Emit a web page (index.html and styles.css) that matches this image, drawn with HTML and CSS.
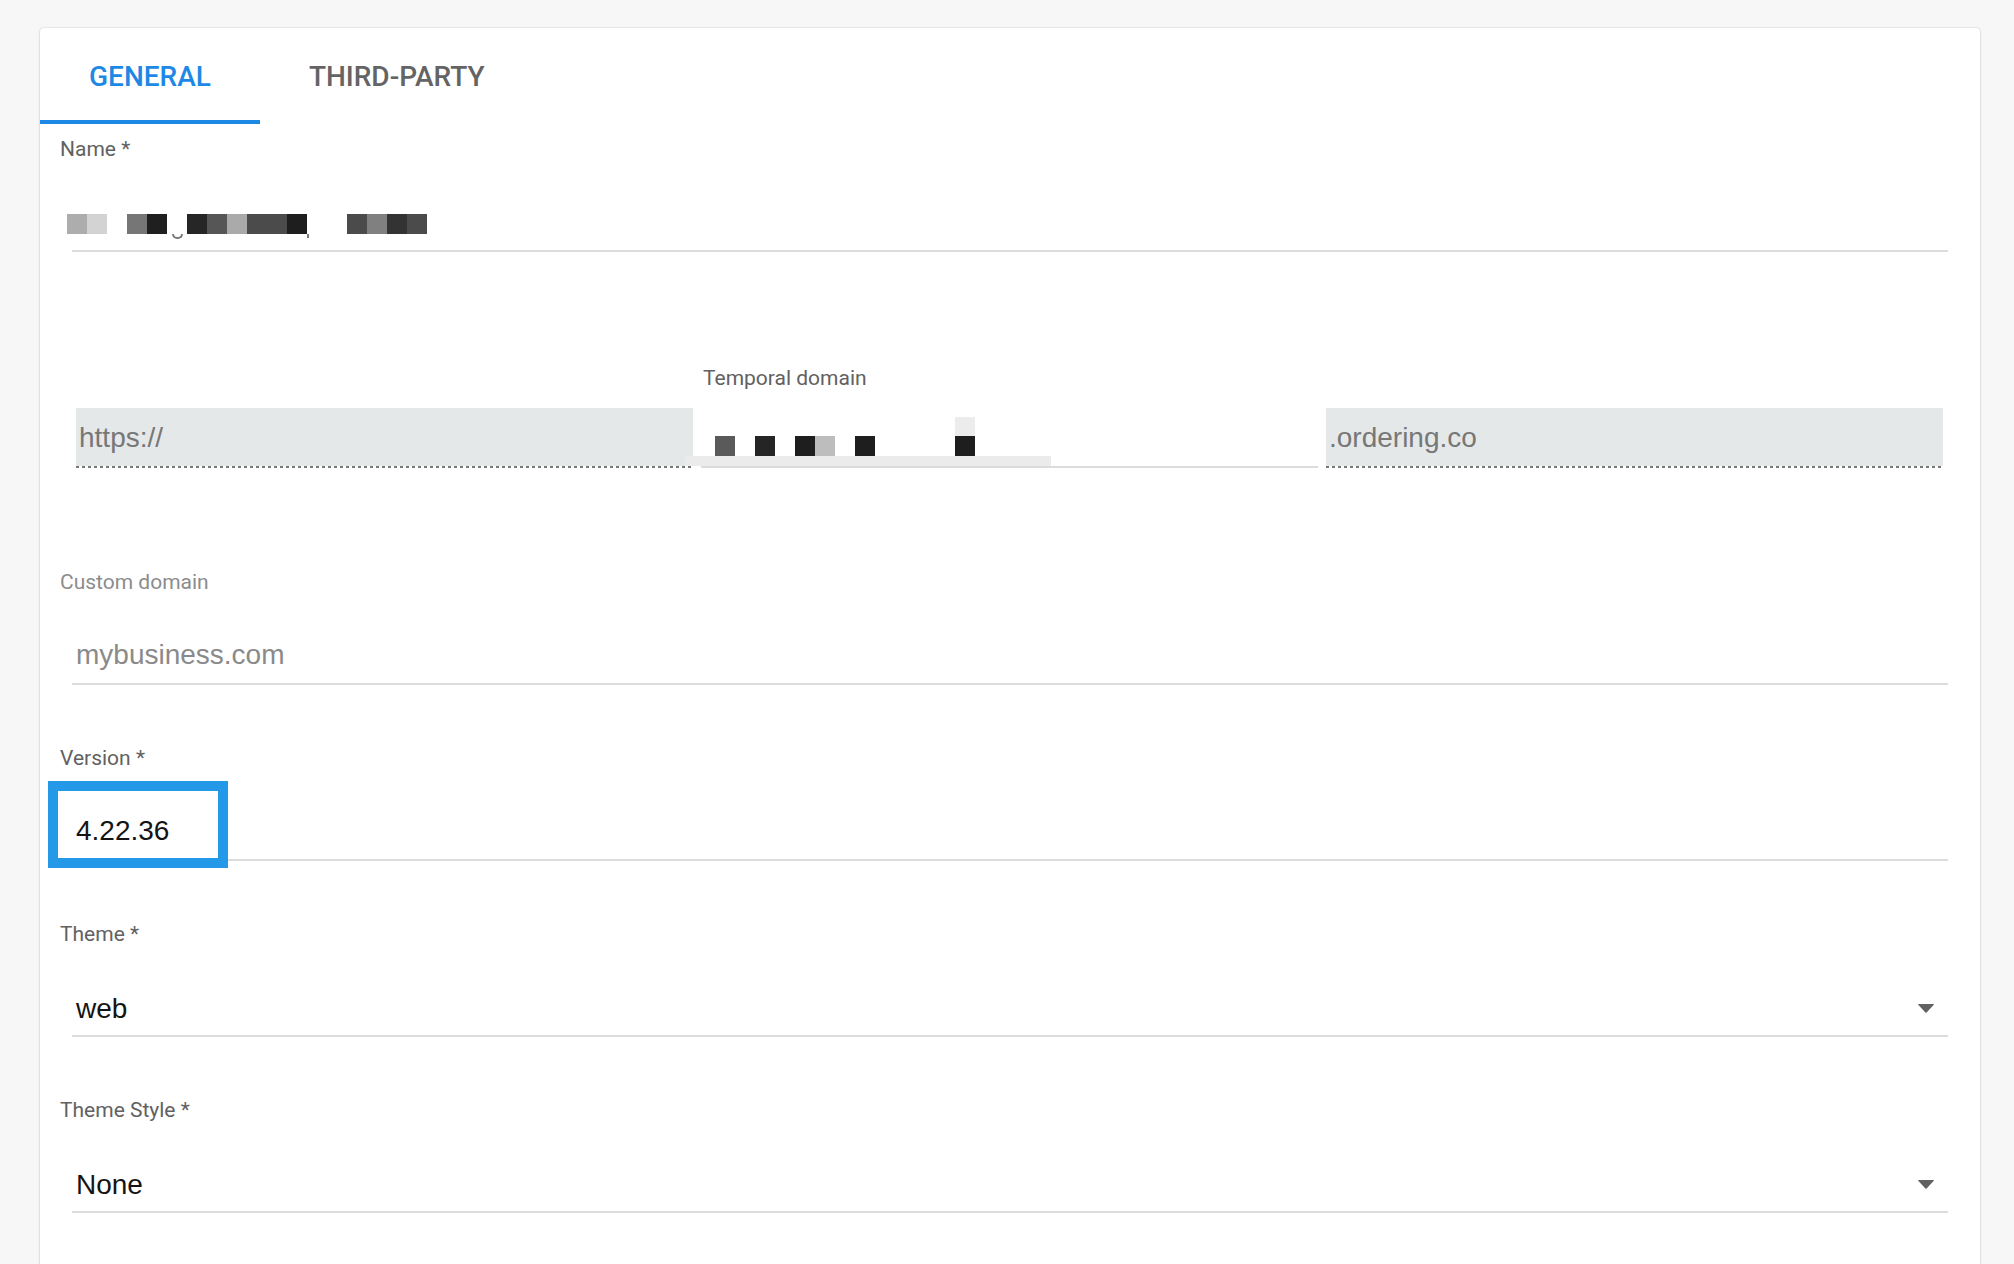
FILE: index.html
```html
<!DOCTYPE html>
<html lang="en">
<head>
<meta charset="utf-8">
<title>Business settings</title>
<link rel="stylesheet" href="styles.css">
</head>
<body>
<div class="card">
  <div class="tabs">
    <div class="tab active">GENERAL</div>
    <div class="tab">THIRD-PARTY</div>
  </div>

  <div class="form">
    <div class="field">
      <div class="label">Name *</div>
      <div class="control redacted-name">
        <span class="px c-ad"></span><span class="px c-d3"></span>
        <span class="sp20"></span>
        <span class="px c-76"></span><span class="px c-1f"></span>
        <span class="smile"></span>
        <span class="px c-26"></span><span class="px c-56"></span><span class="px c-aa"></span><span class="px wide c-4b"></span><span class="px c-1e"></span>
        <span class="tick"></span>
        <span class="px c-4b"></span><span class="px c-80"></span><span class="px c-33"></span><span class="px c-4b"></span>
      </div>
    </div>

    <div class="domain-row">
      <div class="affix">
        <div class="affix-box">https://</div>
        <div class="dots"></div>
      </div>
      <div class="temporal">
        <div class="label temporal-label">Temporal domain</div>
        <div class="temporal-control">
          <div class="redact-row">
            <span class="px c-5a"></span>
            <span class="px c-25 ml20"></span>
            <span class="px c-1e ml20"></span><span class="px c-bd"></span>
            <span class="px c-1e ml20"></span>
            <span class="stack ml80"><span class="px c-ec"></span><span class="px c-1e"></span></span>
          </div>
          <div class="redact-bar"></div>
        </div>
      </div>
      <div class="affix">
        <div class="affix-box">.ordering.co</div>
        <div class="dots"></div>
      </div>
    </div>

    <div class="field custom">
      <div class="label muted">Custom domain</div>
      <div class="control"><span class="value placeholder">mybusiness.com</span></div>
    </div>

    <div class="field">
      <div class="label">Version *</div>
      <div class="control version">
        <span class="value">4.22.36</span>
        <div class="highlight"></div>
      </div>
    </div>

    <div class="field">
      <div class="label">Theme *</div>
      <div class="control select">
        <span class="value">web</span>
        <svg class="caret" width="16" height="9" viewBox="0 0 16 9"><path d="M0 0.5 Q0 0 1 0 H15 Q16 0 16 0.5 L8.6 8.6 Q8 9 7.4 8.6 Z" fill="#616161"/></svg>
      </div>
    </div>

    <div class="field">
      <div class="label">Theme Style *</div>
      <div class="control select">
        <span class="value">None</span>
        <svg class="caret" width="16" height="9" viewBox="0 0 16 9"><path d="M0 0.5 Q0 0 1 0 H15 Q16 0 16 0.5 L8.6 8.6 Q8 9 7.4 8.6 Z" fill="#616161"/></svg>
      </div>
    </div>
  </div>
</div>
</body>
</html>
```

FILE: styles.css
```css
html, body {
  margin: 0;
  padding: 0;
  overflow: hidden;
}

body {
  background: #f7f7f7;
  font-family: Roboto, "Liberation Sans", sans-serif;
}

.card {
  margin: 28px 0 0 40px;
  width: 1940px;
  height: 1300px;
  background: #ffffff;
  border-radius: 4px 4px 0 0;
  box-shadow: 0 0 2px rgba(0, 0, 0, 0.22), 0 1px 3px rgba(0, 0, 0, 0.08);
}

/* Tabs */
.tabs {
  display: flex;
  height: 96px;
}

.tab {
  box-sizing: border-box;
  height: 96px;
  padding: 4px 49px 0;
  border-bottom: 4px solid transparent;
  display: flex;
  align-items: center;
  justify-content: center;
  font-family: Roboto, sans-serif;
  font-weight: 500;
  font-size: 28px;
  color: #646464;
}

.tab.active {
  color: #1e88e5;
  border-bottom-color: #1e88e5;
}

/* Form */
.form {
  padding: 13px 32px 0 20px;
}

.field {
  margin-bottom: 61px;
}

.label {
  font-family: Roboto, sans-serif;
  font-size: 21px;
  line-height: 24px;
  height: 24px;
  color: #616161;
}

.label.muted {
  color: #8c8c8c;
}

.control {
  position: relative;
  box-sizing: border-box;
  height: 91px;
  margin-left: 12px;
  padding: 0 14px 12px 4px;
  border-bottom: 2px solid #dcdcdc;
  display: flex;
  align-items: flex-end;
}

.control.select {
  padding-bottom: 10px;
}

.value {
  flex: 1;
  font-family: "Liberation Sans", Arial, sans-serif;
  font-size: 28px;
  line-height: 32px;
  color: #141414;
}

.value.placeholder {
  color: #8a8a8a;
}

.caret {
  flex: none;
  margin-bottom: 12px;
}

/* Name redaction */
.redacted-name {
  padding: 0 0 16px 0;
}

.redacted-name > .px:first-child {
  margin-left: -5px;
}

.px {
  display: block;
  flex: none;
  width: 20px;
  height: 20px;
}

.px.wide {
  width: 40px;
}

.sp20 {
  flex: none;
  width: 20px;
}

.smile {
  flex: none;
  box-sizing: border-box;
  width: 11px;
  height: 5px;
  margin: 0 4px -5px 5px;
  border: 2px solid #7a7a7a;
  border-top: none;
  border-radius: 0 0 6px 6px;
}

.tick {
  flex: none;
  width: 2px;
  height: 4px;
  margin: 0 38px -4px 0;
  background: #7a7a7a;
}

.c-ad { background: #adadad; }
.c-d3 { background: #d3d3d3; }
.c-76 { background: #767676; }
.c-1f { background: #1f1f1f; }
.c-26 { background: #262626; }
.c-56 { background: #565656; }
.c-aa { background: #aaaaaa; }
.c-4b { background: #4b4b4b; }
.c-1e { background: #1e1e1e; }
.c-80 { background: #808080; }
.c-33 { background: #333333; }
.c-5a { background: #5a5a5a; }
.c-25 { background: #252525; }
.c-bd { background: #bdbdbd; }
.c-ec { background: #ececec; }

.ml20 { margin-left: 20px; }
.ml80 { margin-left: 80px; }

/* Domain row */
.domain-row {
  display: grid;
  grid-template-columns: 1fr 1fr 1fr;
  column-gap: 8px;
  align-items: end;
  margin: 114px 5px 102px 16px;
}

.affix {
  display: flex;
  flex-direction: column;
}

.affix-box {
  height: 58px;
  padding: 2px 0 0 3px;
  box-sizing: border-box;
  display: flex;
  align-items: center;
  background: #e5e8e9;
  font-family: "Liberation Sans", Arial, sans-serif;
  font-size: 28px;
  color: #777777;
}

.dots {
  height: 2px;
  background: repeating-linear-gradient(90deg, #777777 0 3px, transparent 3px 6px);
}

.temporal-label {
  padding-left: 2px;
}

.temporal-control {
  box-sizing: border-box;
  height: 78px;
  border-bottom: 2px solid #dcdcdc;
  display: flex;
  flex-direction: column;
  justify-content: flex-end;
}

.redact-row {
  display: flex;
  align-items: flex-end;
  padding-left: 14px;
}

.stack {
  display: flex;
  flex-direction: column;
}

.stack .px:first-child {
  height: 19px;
}

.redact-bar {
  width: 366px;
  height: 10px;
  margin-left: -16px;
  background: #ebebeb;
  position: relative;
}

/* Version highlight annotation */
.highlight {
  position: absolute;
  left: -24px;
  top: 11px;
  width: 180px;
  height: 87px;
  box-sizing: border-box;
  border: 10px solid #2399e8;
  pointer-events: none;
}
```
